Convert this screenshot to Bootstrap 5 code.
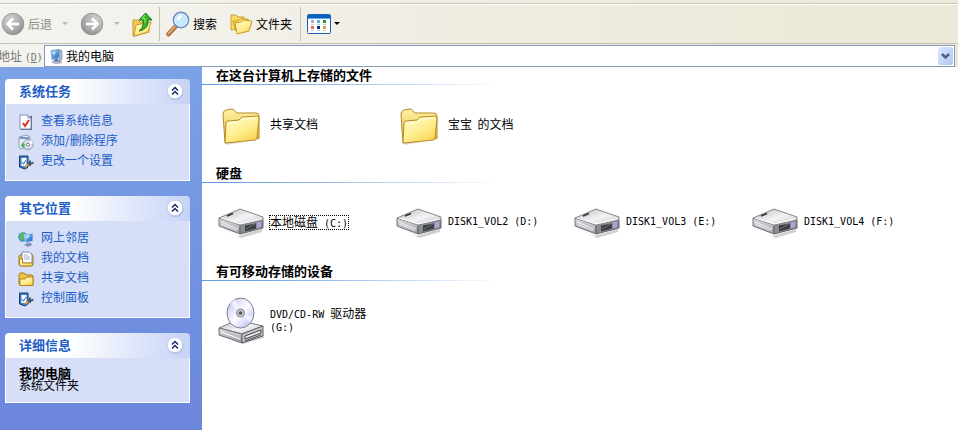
<!DOCTYPE html>
<html lang="zh-CN">
<head>
<meta charset="utf-8">
<meta name="viewport" content="width=device-width, initial-scale=1">
<title>我的电脑</title>
<link href="https://cdn.jsdelivr.net/npm/bootstrap@5.3.0/dist/css/bootstrap.min.css" rel="stylesheet">
<style>
body{font:12px/14px "Noto Sans CJK SC",sans-serif;color:#000;background:#fff}
svg{display:block;flex:none}
.latin{font-family:"DejaVu Sans Mono",monospace;font-size:10px;line-height:10px}
.chrome{background:linear-gradient(90deg,#f4f3f0,#ece9d8 85%)}
.toolbar{height:41px;margin-top:3px;padding-left:1px;border-top:1px solid #cbc8b8;border-bottom:1px solid #c4c2b4;box-shadow:inset 0 1px #fff}
.tool{border:0;background:none;padding:0;display:flex;align-items:center;color:#000;gap:3px}
.tool:disabled{color:#8e8d86}
.caret{width:0;height:0;border:3px solid transparent;border-top-color:currentColor;border-bottom:0}
.caret-off{color:#bbb9ae;margin:0 12px 0 10px}
.rule{width:1px;height:34px;background:#c5c2b2;margin:0 6px 0 5px}
.address{height:23px;padding-right:3px}
.address-label{width:44px;margin-left:-2px;margin-right:2px;color:#77766e;white-space:nowrap}
.combo{height:22px;border:1px solid #7f9db9;background:#fff;position:relative}
.combo select{appearance:none;border:0;background:none;padding:0 0 0 21px;height:20px;font-size:12px;line-height:14px;color:#000;outline:0}
.combo .pc{position:absolute;left:4px;top:2px;pointer-events:none}
.combo .drop{position:absolute;right:1px;top:1px;pointer-events:none}
.work{min-height:calc(100vh - 67px)}
.side{width:202px;padding:12px 12px 12px 5px;gap:15px;background:linear-gradient(#7ba2e7,#6c86dc)}
.pane-head{height:25px;padding:0 6px 2px 14px;border-radius:4px 4px 0 0;background:linear-gradient(90deg,#fff 35%,#c6d3f7);color:#215dc6}
.pane-head h2,.group h2{font-size:13px;line-height:15px;font-weight:700;margin:0}
.pane-body{border:1px solid #fff;border-top:0;background:#d6dff7;padding:6px 13px 10px 12px}
.pane-body a{height:20px;gap:7px;color:#215dc6;text-decoration:none}
.pane-body a svg{margin-top:3px}
.fold{border:0;padding:0;background:none}
.info{padding:9px 14px 10px 13px;height:45px;line-height:12px}
.info strong{font-size:13px}
.group h2{height:18px;padding:0 0 0 14px;border-bottom:1px solid;border-image:linear-gradient(90deg,#5f9ae0,#86b2e8 100px,#fff 300px) 1}
.items{height:80px;padding:0 0 2px 14px}
.item{width:178px;gap:6px;color:#000;text-decoration:none;line-height:12px}
.item:hover{color:#000}
.picked{outline:1px dotted #000}
</style>
<script src="https://cdn.jsdelivr.net/npm/bootstrap@5.3.0/dist/js/bootstrap.bundle.min.js"></script>
</head>
<body>
<svg width="0" height="0" class="position-absolute" aria-hidden="true">
<defs>
<radialGradient id="gray" cx=".35" cy=".3" r=".75"><stop stop-color="#d0d0d0"/><stop offset=".6" stop-color="#b0b0b0"/><stop offset="1" stop-color="#909090"/></radialGradient>
<linearGradient id="gold" x1="0" y1="0" x2=".7" y2="1"><stop stop-color="#fffbd0"/><stop offset=".6" stop-color="#ffee90"/><stop offset="1" stop-color="#f9d552"/></linearGradient>
<linearGradient id="goldback" x1="0" y1="0" x2="0" y2="1"><stop stop-color="#fff3a5"/><stop offset="1" stop-color="#e7bb3a"/></linearGradient>
<linearGradient id="metal" x1="0" y1="0" x2="1" y2="1"><stop stop-color="#b9b9bd"/><stop offset=".55" stop-color="#f4f4f6"/><stop offset="1" stop-color="#c2c2c8"/></linearGradient>
<linearGradient id="metalside" x1="0" y1="0" x2="0" y2="1"><stop stop-color="#dedee1"/><stop offset="1" stop-color="#9c9ca3"/></linearGradient>
<linearGradient id="disc" x1="0" y1="0" x2="1" y2="1"><stop stop-color="#b8b8f2"/><stop offset=".3" stop-color="#e1e2fb"/><stop offset=".5" stop-color="#fff"/><stop offset=".7" stop-color="#dedffb"/><stop offset="1" stop-color="#b4b5ee"/></linearGradient>
<linearGradient id="screen" x1="0" y1="0" x2="1" y2="1"><stop stop-color="#8fd3fb"/><stop offset="1" stop-color="#175fc4"/></linearGradient>
<linearGradient id="dropbg" x1="0" y1="0" x2="1" y2="1"><stop stop-color="#dce6fd"/><stop offset="1" stop-color="#b1c6f5"/></linearGradient>
<symbol id="circle-arrow" viewBox="0 0 24 24"><circle cx="12" cy="12" r="10.8" fill="url(#gray)" stroke="#8f8f8f" stroke-width=".8"/><path d="M18 12H7M12 6.500 6.500 12l5.500 5.500" fill="none" stroke="#fff" stroke-width="2.600"/></symbol>
<symbol id="folder" viewBox="0 0 48 48"><path d="M8 42 44 36v3L11 45z" fill="#777" opacity=".25"/><path d="M7 14q0-3 3-4l6-1q2 0 3 2l2 2 19 0q3 0 3 3v22L9 43z" fill="url(#goldback)" stroke="#b98a26"/><path d="M10 23q0-2 2-2l11-1 3-3 15-1q2 0 2 2l-2 20q0 2-2 2L10 43q-1 0-1-1z" fill="url(#gold)" stroke="#b88a28"/><path d="M11.500 23.500 24 22l3-3 14-1" fill="none" stroke="#fffce0" stroke-width="1.200"/></symbol>
<symbol id="drive" viewBox="0 0 48 48"><path d="M5 29 22 38 46 31v3L25 40z" fill="#777" opacity=".35"/><path d="M3 20v8l21 8V26z" fill="url(#metalside)" stroke="#77777d"/><path d="M24 26v10l23-6v-8z" fill="#8c8c95" stroke="#63636a"/><path d="M3 20 24 11l23 8v3l-23 5z" fill="url(#metal)" stroke="#85858b" stroke-linejoin="round"/><path d="M29 27.500v6l11-3v-5z" fill="#3c3e46"/><path d="m30 31 9-5" stroke="#69716e"/><path d="M41 24.500v5.500l4-1v-5.500z" fill="#aaa5e0"/><path d="m11 18 6-2.500" stroke="#333" stroke-width="1.500"/><path d="m5 24 17 7M6 26.500l15 6" stroke="#fff" stroke-width=".8"/><path d="M5 20 24 26l21-5" fill="none" stroke="#fff"/></symbol>
<symbol id="cdrive" viewBox="-1 0 48 48"><path d="M5 40 24 47 47 39v3L26 48z" fill="#777" opacity=".3"/><path d="M2 32 20 24l26 6-21 8z" fill="url(#metal)" stroke="#77777d"/><path d="M2 32v7l23 8v-9z" fill="url(#metalside)" stroke="#707077"/><path d="M25 38v9l21-7v-10z" fill="#c3c3c8" stroke="#606068"/><path d="m28 40 16-6v3l-16 6z" fill="#eee" stroke="#444"/><path d="m28 45 16-6" stroke="#555"/><path d="m4 36 19 7" stroke="#fff"/><ellipse cx="23.500" cy="17" rx="13.500" ry="15" fill="url(#disc)" stroke="#808090"/><path d="M23 17 13 7l5-4zM24 17l9 10 3-6z" fill="#fff" opacity=".6"/><circle cx="23.500" cy="17" r="4" fill="#c8c8cd" stroke="#88888f"/><circle cx="23.500" cy="17" r="1.800" fill="#555"/></symbol>
<symbol id="chev" viewBox="0 0 18 18"><circle cx="9.500" cy="10" r="8" fill="#6d82b8" opacity=".35"/><circle cx="9" cy="9" r="7.700" fill="#fff" stroke="#b6c2e3" stroke-width=".7"/><path d="m6 8.500 3-3 3 3M6 12.500l3-3 3 3" fill="none" stroke="#14286b" stroke-width="1.500"/></symbol>
<symbol id="settings" viewBox="0 0 16 16"><path d="M1.500 2h8.500v11l-3 2-5.500-2z" fill="#3f7fc4" stroke="#173e70"/><path d="M3.500 4h5v8h-5z" fill="#fff"/><path d="m4 8 1.500 2L8 6" fill="none" stroke="#4b91d6" stroke-width="1.200"/><path d="M7 13 10.500 9.500" stroke="#e0a544" stroke-width="2"/><path d="M9.500 9.500h3.500l2.500-1M12 6.500V12" fill="none" stroke="#3d4f6c" stroke-width="1.800"/></symbol>
<symbol id="pc" viewBox="0 0 16 16"><ellipse cx="8" cy="13.500" rx="5.500" ry="2" fill="#b9bcc9"/><path d="M2 2 10 1l1 8-8 2z" fill="url(#screen)" stroke="#8fa7ca"/><path d="m10 1 3 1v9l-3 2z" fill="#aab7d0" stroke="#7888a8" stroke-width=".6"/><path d="M6 10h3v2l2 1H5z" fill="#5476b7"/><path d="M3.500 3.500 8 3l-4 4z" fill="#d3f2ff" opacity=".8"/></symbol>
</defs>
</svg>

<header class="chrome overflow-hidden">
<nav class="toolbar d-flex align-items-center" aria-label="工具栏">
<button class="tool" disabled><svg width="24" height="24"><use href="#circle-arrow"/></svg>后退</button>
<span class="caret caret-off"></span>
<button class="tool" disabled aria-label="前进"><svg width="24" height="24" viewBox="0 0 24 24"><g transform="matrix(-1 0 0 1 24 0)"><use href="#circle-arrow" width="24" height="24"/></g></svg></button>
<span class="caret caret-off"></span>
<button class="tool" aria-label="向上"><svg width="22" height="26" viewBox="0 0 22 26"><path d="M1 9h5l2 2h9v10L3 25H1z" fill="#f4cc54" stroke="#c5972c"/><path d="M4 14 19 11l-3 10L2 25z" fill="url(#gold)" stroke="#c79e35"/><path d="M7 20q5-3 4-11H7l6.500-7L20 9h-4q1 9-9 11z" fill="#38b32c" stroke="#167818"/><path d="m13 4-3 3.500h3V12" fill="none" stroke="#98ee78"/></svg></button>
<span class="rule"></span>
<button class="tool"><svg width="24" height="26" viewBox="0 0 24 26"><path d="M10 15 2.500 23" stroke="#98653a" stroke-width="4.500" stroke-linecap="round"/><path d="M9.500 15 2.500 22.500" stroke="#e7a463" stroke-width="2.500" stroke-linecap="round"/><circle cx="15" cy="9" r="7.500" fill="#c4e9ff" stroke="#6f91c9" stroke-width="1.800"/><circle cx="15" cy="9" r="6.300" fill="none" stroke="#eef8ff" stroke-width=".8"/><path d="M11 8q1-4 5-4-1 4-5 6z" fill="#fff"/></svg>搜索</button>
<button class="tool ms-2 ps-1"><svg width="24" height="24" viewBox="0 0 24 24"><path d="M2 3h5l2 2h6v10L2 18z" fill="#f9dc65" stroke="#cb9d2c"/><path d="M4 9h5l2-2h8v12H7z" fill="#ffe773" stroke="#c99927"/><path d="m6 11 6-1 2-2 9 1-3 10-12 3z" fill="url(#gold)" stroke="#c99725"/></svg>文件夹</button>
<span class="rule ms-2"></span>
<button class="tool" aria-label="查看"><svg width="24" height="20" viewBox="0 0 24 20"><rect x=".5" y=".5" width="23" height="19" rx="1" fill="#fff" stroke="#1661b5"/><path d="M1 1h22v3H1z" fill="#0b60bf"/><path d="M1 4.500h22" stroke="#58a8eb"/><path d="M4 6h3v3H4z" fill="#aaa6d8"/><path d="M10 6h3v3h-3z" fill="#69a5e9"/><path d="M16 6h3v3h-3z" fill="#249138"/><path d="M4 12h3v3H4z" fill="#e86e52"/><path d="M10 12h3v3h-3z" fill="#10288b"/><path d="M16 12h3v3h-3z" fill="#d6a63c"/><path d="M4 10.500h3m3 0h3m3 0h3M4 16.500h3m3 0h3m3 0h3" stroke="#c6ccd8"/></svg><span class="caret"></span></button>
</nav>
<div class="address d-flex align-items-center">
<label for="addr" class="address-label">地址 <span class="latin">(<u>D</u>)</span></label>
<div class="combo d-flex flex-fill">
<svg class="pc" width="16" height="17"><use href="#pc"/></svg>
<select id="addr" class="flex-fill"><option>我的电脑</option></select>
<svg class="drop" width="15" height="18" viewBox="0 0 15 18"><rect width="15" height="18" rx="2" fill="url(#dropbg)"/><path d="m4 7 3.500 3.500L11 7" fill="none" stroke="#4d6185" stroke-width="2.500"/></svg>
</div>
</div>
</header>

<div class="work d-flex">
<aside class="side d-flex flex-column flex-shrink-0">
<section>
<div class="pane-head d-flex align-items-center justify-content-between"><h2>系统任务</h2><button class="fold" aria-label="折叠系统任务"><svg width="18" height="18"><use href="#chev"/></svg></button></div>
<div class="pane-body">
<a href="#" class="d-flex align-items-center"><svg width="16" height="16" viewBox="0 0 16 16"><path d="M3 2h11v14H3z" fill="#526380"/><path d="M2 1h8l3 3v11H2z" fill="#fff" stroke="#7f92b4"/><path d="M10 1v3h3" fill="#c8d5ec" stroke="#7f92b4"/><path d="m5 9 2 3 4-6" fill="none" stroke="#dc2d28" stroke-width="2"/></svg>查看系统信息</a>
<a href="#" class="d-flex align-items-center"><svg width="16" height="16" viewBox="0 0 16 16"><path d="M1 3 9 1l3 2v9l-9 3-2-2z" fill="#e7ebf5" stroke="#8d9dbb"/><path d="M2 4h9" stroke="#7099cf" stroke-width="2"/><circle cx="10" cy="10.500" r="5" fill="#dedff4" stroke="#8d94aa"/><path d="m10 10 3-4 2 4z" fill="#fff"/><circle cx="10" cy="10.500" r="1.500" fill="#fff" stroke="#777"/><path d="m4 9 3 1-1 4-3-2z" fill="#43b64a"/></svg>添加/删除程序</a>
<a href="#" class="d-flex align-items-center"><svg width="16" height="16"><use href="#settings"/></svg>更改一个设置</a>
</div>
</section>
<section>
<div class="pane-head d-flex align-items-center justify-content-between"><h2>其它位置</h2><button class="fold" aria-label="折叠其它位置"><svg width="18" height="18"><use href="#chev"/></svg></button></div>
<div class="pane-body">
<a href="#" class="d-flex align-items-center"><svg width="16" height="16" viewBox="0 0 16 16"><circle cx="5" cy="6" r="4.800" fill="#3d8bdc"/><path d="M2 3q3-2 5-1L5 5l1 3-2 2-3-3z" fill="#57bd50"/><path d="m6 4 9-2v8l-7 2z" fill="url(#screen)" stroke="#c3d0e8"/><path d="m7.500 5 5-1-4 4z" fill="#c5eeff"/><path d="M9 12h4l1 2-4 2-4-2z" fill="#8392bd"/></svg>网上邻居</a>
<a href="#" class="d-flex align-items-center"><svg width="16" height="16" viewBox="0 0 16 16"><path d="M1 5 3 3h11l1 3v8l-2 1H3l-2-1z" fill="#e8b93e" stroke="#a97919"/><path d="M4 1h7l3 3v8H4z" fill="#fff" stroke="#7c91b5"/><path d="M6 4h4M6 6h6M6 8h6" stroke="#9cb3da"/><path d="M1.500 8h3v4h10v2l-1 1H3l-1.500-1z" fill="url(#gold)" stroke="#b28321"/></svg>我的文档</a>
<a href="#" class="d-flex align-items-center"><svg width="16" height="16" viewBox="0 0 16 16"><path d="M1 3.500 2 2h4l2 2h6l1 1v9H2l-1-1z" fill="#edc24a" stroke="#a97b1a"/><path d="M2 8h5l2-2h6v8.500H2z" fill="url(#gold)" stroke="#b1831f"/></svg>共享文档</a>
<a href="#" class="d-flex align-items-center"><svg width="16" height="16"><use href="#settings"/></svg>控制面板</a>
</div>
</section>
<section>
<div class="pane-head d-flex align-items-center justify-content-between"><h2>详细信息</h2><button class="fold" aria-label="折叠详细信息"><svg width="18" height="18"><use href="#chev"/></svg></button></div>
<div class="pane-body info"><strong class="d-block">我的电脑</strong>系统文件夹</div>
</section>
</aside>
<main class="flex-fill">
<section class="group"><h2>在这台计算机上存储的文件</h2>
<div class="items d-flex align-items-center">
<a href="#" class="item d-flex align-items-center"><svg width="48" height="48"><use href="#folder"/></svg><span>共享文档</span></a>
<a href="#" class="item d-flex align-items-center"><svg width="48" height="48"><use href="#folder"/></svg><span>宝宝&nbsp; 的文档</span></a>
</div></section>
<section class="group"><h2>硬盘</h2>
<div class="items d-flex align-items-center">
<a href="#" class="item d-flex align-items-center"><svg width="48" height="48"><use href="#drive"/></svg><span class="picked">本地磁盘<span class="latin"> (C:)</span></span></a>
<a href="#" class="item d-flex align-items-center"><svg width="48" height="48"><use href="#drive"/></svg><span class="latin">DISK1_VOL2 (D:)</span></a>
<a href="#" class="item d-flex align-items-center"><svg width="48" height="48"><use href="#drive"/></svg><span class="latin">DISK1_VOL3 (E:)</span></a>
<a href="#" class="item d-flex align-items-center"><svg width="48" height="48"><use href="#drive"/></svg><span class="latin">DISK1_VOL4 (F:)</span></a>
</div></section>
<section class="group"><h2>有可移动存储的设备</h2>
<div class="items d-flex align-items-center">
<a href="#" class="item d-flex align-items-center"><svg width="48" height="48"><use href="#cdrive"/></svg><span><span class="latin">DVD/CD-RW </span>驱动器<br><span class="latin">(G:)</span></span></a>
</div></section>
</main>
</div>
</body>
</html>
